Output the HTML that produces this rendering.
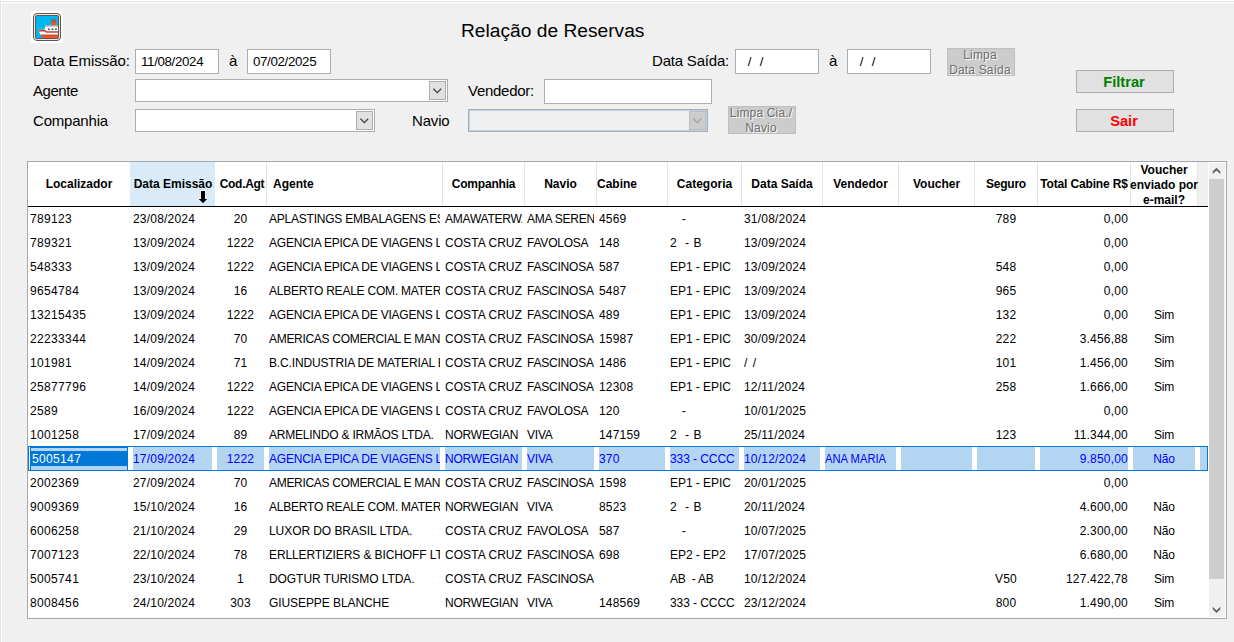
<!DOCTYPE html>
<html lang="pt-BR"><head><meta charset="utf-8"><title>Relação de Reservas</title>
<style>
*{box-sizing:border-box;margin:0;padding:0}
html,body{width:1234px;height:642px;overflow:hidden;background:#f0f0f0}
body{position:relative;font-family:"Liberation Sans",sans-serif;color:#000;font-size:12px}
.abs{position:absolute}
.frame-t{position:absolute;left:0;top:0;width:1234px;height:3px;background:linear-gradient(#fff 0 1px,#e3e3e3 1px 2px,#fff 2px 3px)}
.frame-l{position:absolute;left:0;top:1px;width:1px;height:641px;background:#e3e3e3}
.frame-l2{position:absolute;left:1px;top:2px;width:1px;height:640px;background:#fff}
.lbl{position:absolute;font-size:15px;line-height:20px;white-space:nowrap}
.inp{position:absolute;background:#fff;border:1px solid #abadb3;font-size:13.33px;line-height:24px;padding-left:5px;white-space:pre;letter-spacing:-.35px}
.cmb{position:absolute;background:#fff;border:1px solid #abadb3}
.cmb .dd{position:absolute;right:1px;top:1px;bottom:1px;width:17px;background:#e1e1e1;border:1px solid #abadb3}
.btn{position:absolute;background:#e1e1e1;border:1px solid #adadad;text-align:center;font-weight:bold;font-size:14.67px;line-height:22px;padding-right:2px}
.dbtn{position:absolute;background:#cccccc;border:1px solid #bfbfbf;color:#6d6d6d;text-align:center;font-size:12px;line-height:15px;text-shadow:1px 1px 0 #fff}
.dbtn span{position:relative;top:-1px;left:-1px;display:block;letter-spacing:.15px}
#grid{position:absolute;left:27px;top:161px;width:1200px;height:458px;background:#fff;border:1px solid #a3a9b3}
.hc{position:absolute;top:162px;height:44px;font-weight:bold;font-size:12px;line-height:14px;display:flex;align-items:center;white-space:nowrap}
.hc.ctr{justify-content:center;text-align:center}
.hs{position:absolute;top:162px;width:1px;height:44px;background:#e5e5e5}
.r{position:absolute;left:28px;width:1180px;height:24px}
.c{position:absolute;top:0;height:24px;line-height:24px;font-size:12px;white-space:pre;overflow:hidden}
.c.t{letter-spacing:-.22px}
.c.n{letter-spacing:.2px}
.sel .c{color:#0000ff;background:#b4d5f1;top:0;height:23px;line-height:24px}
</style></head><body>
<div class="frame-t"></div><div class="frame-l"></div><div class="frame-l2"></div>

<svg class="abs" style="left:31px;top:11px" width="32" height="32" viewBox="0 0 32 32">
<rect width="32" height="32" fill="#fff"/>
<rect x="2.5" y="2.5" width="27" height="27" rx="3.5" fill="#f2ebe4" stroke="#5e5652" stroke-width="1"/>
<rect x="4.5" y="4.5" width="23" height="23" rx="1.5" fill="#00b8f1" stroke="#5e5652" stroke-width="1"/>
<rect x="20.2" y="8.5" width="5" height="5.6" fill="#f4512c"/>
<rect x="20.2" y="8.5" width="5" height="2.1" fill="#6f5550"/>
<rect x="20.2" y="9.2" width="5" height="0.6" fill="#9a8580"/>
<path d="M15 13.9 H27 V20.6 H14.2 Q12.6 18.2 15 13.9 Z" fill="#fff"/>
<rect x="14.9" y="13.8" width="12.1" height="1" fill="#8d8380"/>
<rect x="14.6" y="14.8" width="12.4" height="1.2" fill="#cfc9c7"/>
<circle cx="17.9" cy="18.2" r="0.95" fill="#0c5f80"/><circle cx="21.5" cy="18.2" r="0.95" fill="#0c5f80"/><circle cx="25" cy="18.2" r="0.95" fill="#0c5f80"/>
<path d="M7.2 18.7 H13.8 L15.8 20.3 H27 V27 H12.4 Q8.6 24 7.2 18.7 Z" fill="#fff"/>
<path d="M7.2 18.7 H13.8 L15.8 20.3 H27 V21.7 H15.3 L13.3 20.4 H7.7 Z" fill="#c9452c"/>
<path d="M8.9 23 H27 V24 H9.4 Z" fill="#c5d3d8"/>
<path d="M9.4 24 H27 V27 H12.4 Q10.6 25.8 9.4 24 Z" fill="#f4512c"/>
<path d="M9.4 24 H27" stroke="#b8402a" stroke-width="0.5" fill="none"/>
</svg>
<div class="abs" style="left:461px;top:19px;font-size:19.2px;line-height:24px;white-space:nowrap">Relação de Reservas</div>
<div class="lbl" style="left:33px;top:51px;letter-spacing:-0.05px">Data Emissão:</div>
<div class="lbl" style="left:229px;top:51px;letter-spacing:0px">à</div>
<div class="lbl" style="left:652px;top:51px;letter-spacing:-0.2px">Data Saída:</div>
<div class="lbl" style="left:829px;top:51px;letter-spacing:0px">à</div>
<div class="lbl" style="left:33px;top:81px;letter-spacing:-0.45px">Agente</div>
<div class="lbl" style="left:468px;top:81px;letter-spacing:-0.28px">Vendedor:</div>
<div class="lbl" style="left:33px;top:111px;letter-spacing:-0.2px">Companhia</div>
<div class="lbl" style="left:412px;top:111px;letter-spacing:-0.17px">Navio</div>
<div class="inp" style="left:135px;top:49px;width:84px;height:25px">11/08/2024</div>
<div class="inp" style="left:247px;top:49px;width:84px;height:25px">07/02/2025</div>
<div class="inp" style="left:735px;top:49px;width:84px;height:25px">  /<span style="margin-left:2px">  /</span></div>
<div class="inp" style="left:847px;top:49px;width:84px;height:25px">  /<span style="margin-left:2px">  /</span></div>
<div class="inp" style="left:544px;top:79px;width:168px;height:25px"></div>
<div class="cmb" style="left:135px;top:79px;width:313px;height:23px"><div class="dd"><svg width="9" height="6" viewBox="0 0 9 6" style="position:absolute;left:3px;top:6px"><path d="M0.4 0.7 L4.3 4.6 L8.2 0.7" fill="none" stroke="#404040" stroke-width="1.3"/></svg></div></div>
<div class="cmb" style="left:135px;top:109px;width:240px;height:23px"><div class="dd"><svg width="9" height="6" viewBox="0 0 9 6" style="position:absolute;left:3px;top:6px"><path d="M0.4 0.7 L4.3 4.6 L8.2 0.7" fill="none" stroke="#404040" stroke-width="1.3"/></svg></div></div>
<div class="cmb" style="left:468px;top:109px;width:240px;height:23px;background:#f0f0f0;border-color:#adadad;box-shadow:inset 0 0 0 1px #b5d3f2"><div class="dd" style="background:#cccccc;border-color:#bfbfbf"><svg width="9" height="6" viewBox="0 0 9 6" style="position:absolute;left:3px;top:6px"><path d="M0.4 0.7 L4.3 4.6 L8.2 0.7" fill="none" stroke="#a0a0a0" stroke-width="1.3"/></svg></div></div>
<div class="dbtn" style="left:947px;top:48px;width:68px;height:28px"><span>Limpa<br>Data Saída</span></div>
<div class="dbtn" style="left:728px;top:106px;width:68px;height:28px"><span>Limpa Cia./<br>Navio</span></div>
<div class="btn" style="left:1076px;top:70px;width:98px;height:23px;color:#008000">Filtrar</div>
<div class="btn" style="left:1076px;top:109px;width:98px;height:23px;color:#ff0000">Sair</div>
<div id="grid"></div>
<div class="abs" style="left:130px;top:162px;width:85px;height:44px;background:#d9ebf9"></div>
<div class="abs" style="left:1198px;top:162px;width:10px;height:44px;background:#f0f0f0"></div>
<div class="hs" style="left:266px"></div>
<div class="hs" style="left:442px"></div>
<div class="hs" style="left:524px"></div>
<div class="hs" style="left:596px"></div>
<div class="hs" style="left:667px"></div>
<div class="hs" style="left:741px"></div>
<div class="hs" style="left:822px"></div>
<div class="hs" style="left:898px"></div>
<div class="hs" style="left:974px"></div>
<div class="hs" style="left:1037px"></div>
<div class="hs" style="left:1130px"></div>
<div class="hs" style="left:1197px"></div>
<div class="hc ctr" style="left:28px;width:102px;">Localizador</div>
<div class="hc ctr" style="left:131px;width:83px;padding-left:1px;">Data Emissão</div>
<div class="hc ctr" style="left:215px;width:51px;letter-spacing:-0.3px;padding-left:3px;">Cod.Agt</div>
<div class="hc" style="left:267px;width:175px;padding-left:6px;">Agente</div>
<div class="hc ctr" style="left:443px;width:81px;letter-spacing:-0.2px;">Companhia</div>
<div class="hc ctr" style="left:525px;width:71px;">Navio</div>
<div class="hc" style="left:597px;width:70px;padding-left:0px;">Cabine</div>
<div class="hc ctr" style="left:668px;width:73px;">Categoria</div>
<div class="hc ctr" style="left:742px;width:80px;">Data Saída</div>
<div class="hc ctr" style="left:823px;width:75px;">Vendedor</div>
<div class="hc ctr" style="left:899px;width:75px;">Voucher</div>
<div class="hc ctr" style="left:975px;width:62px;letter-spacing:-0.25px;">Seguro</div>
<div class="hc ctr" style="left:1038px;width:92px;letter-spacing:-0.15px;">Total Cabine R$</div>
<div class="hc ctr" style="left:1131px;width:66px;line-height:15px;top:163px;height:45px;">Voucher<br>enviado por<br>e-mail?</div>
<svg class="abs" style="left:198px;top:190px" width="10" height="14" viewBox="0 0 10 14"><path d="M3 1.1 H7 V9 H9.3 L5 13.2 L0.7 9 H3 Z" fill="#000" stroke="#fff" stroke-opacity=".75" stroke-width="1.2" paint-order="stroke"/></svg>
<div class="abs" style="left:28px;top:206px;width:1180px;height:1px;background:#000"></div>
<div class="r" style="top:207px">
<div class="c n" style="left:2px;width:98px;letter-spacing:.35px;">789123</div>
<div class="c n" style="left:105px;width:79px;">23/08/2024</div>
<div class="c n" style="left:189px;width:47px;text-align:center;">20</div>
<div class="c t" style="left:241px;width:171px;">APLASTINGS EMBALAGENS ESPECIAIS</div>
<div class="c t" style="left:417px;width:77px;">AMAWATERWAYS</div>
<div class="c t" style="left:499px;width:67px;">AMA SERENA</div>
<div class="c n" style="left:571px;width:66px;">4569</div>
<div class="c t" style="left:642px;width:69px;letter-spacing:0.55px;">   -</div>
<div class="c n" style="left:716px;width:76px;">31/08/2024</div>
<div class="c n" style="left:949px;width:58px;text-align:center;">789</div>
<div class="c n" style="left:1012px;width:88px;text-align:right;">0,00</div>
</div>
<div class="r" style="top:231px">
<div class="c n" style="left:2px;width:98px;letter-spacing:.35px;">789321</div>
<div class="c n" style="left:105px;width:79px;">13/09/2024</div>
<div class="c n" style="left:189px;width:47px;text-align:center;">1222</div>
<div class="c t" style="left:241px;width:171px;">AGENCIA EPICA DE VIAGENS LTDA</div>
<div class="c t" style="left:417px;width:77px;letter-spacing:0.05px;">COSTA CRUZ</div>
<div class="c t" style="left:499px;width:67px;">FAVOLOSA</div>
<div class="c n" style="left:571px;width:66px;">148</div>
<div class="c t" style="left:642px;width:69px;letter-spacing:0.55px;">2  - B</div>
<div class="c n" style="left:716px;width:76px;">13/09/2024</div>
<div class="c n" style="left:1012px;width:88px;text-align:right;">0,00</div>
</div>
<div class="r" style="top:255px">
<div class="c n" style="left:2px;width:98px;letter-spacing:.35px;">548333</div>
<div class="c n" style="left:105px;width:79px;">13/09/2024</div>
<div class="c n" style="left:189px;width:47px;text-align:center;">1222</div>
<div class="c t" style="left:241px;width:171px;">AGENCIA EPICA DE VIAGENS LTDA</div>
<div class="c t" style="left:417px;width:77px;letter-spacing:0.05px;">COSTA CRUZ</div>
<div class="c t" style="left:499px;width:67px;">FASCINOSA</div>
<div class="c n" style="left:571px;width:66px;">587</div>
<div class="c t" style="left:642px;width:69px;letter-spacing:-0.05px;">EP1 - EPIC</div>
<div class="c n" style="left:716px;width:76px;">13/09/2024</div>
<div class="c n" style="left:949px;width:58px;text-align:center;">548</div>
<div class="c n" style="left:1012px;width:88px;text-align:right;">0,00</div>
</div>
<div class="r" style="top:279px">
<div class="c n" style="left:2px;width:98px;letter-spacing:.35px;">9654784</div>
<div class="c n" style="left:105px;width:79px;">13/09/2024</div>
<div class="c n" style="left:189px;width:47px;text-align:center;">16</div>
<div class="c t" style="left:241px;width:171px;">ALBERTO REALE COM. MATERIAIS</div>
<div class="c t" style="left:417px;width:77px;letter-spacing:0.05px;">COSTA CRUZ</div>
<div class="c t" style="left:499px;width:67px;">FASCINOSA</div>
<div class="c n" style="left:571px;width:66px;">5487</div>
<div class="c t" style="left:642px;width:69px;letter-spacing:-0.05px;">EP1 - EPIC</div>
<div class="c n" style="left:716px;width:76px;">13/09/2024</div>
<div class="c n" style="left:949px;width:58px;text-align:center;">965</div>
<div class="c n" style="left:1012px;width:88px;text-align:right;">0,00</div>
</div>
<div class="r" style="top:303px">
<div class="c n" style="left:2px;width:98px;letter-spacing:.35px;">13215435</div>
<div class="c n" style="left:105px;width:79px;">13/09/2024</div>
<div class="c n" style="left:189px;width:47px;text-align:center;">1222</div>
<div class="c t" style="left:241px;width:171px;">AGENCIA EPICA DE VIAGENS LTDA</div>
<div class="c t" style="left:417px;width:77px;letter-spacing:0.05px;">COSTA CRUZ</div>
<div class="c t" style="left:499px;width:67px;">FASCINOSA</div>
<div class="c n" style="left:571px;width:66px;">489</div>
<div class="c t" style="left:642px;width:69px;letter-spacing:-0.05px;">EP1 - EPIC</div>
<div class="c n" style="left:716px;width:76px;">13/09/2024</div>
<div class="c n" style="left:949px;width:58px;text-align:center;">132</div>
<div class="c n" style="left:1012px;width:88px;text-align:right;">0,00</div>
<div class="c t" style="left:1105px;width:62px;text-align:center;">Sim</div>
</div>
<div class="r" style="top:327px">
<div class="c n" style="left:2px;width:98px;letter-spacing:.35px;">22233344</div>
<div class="c n" style="left:105px;width:79px;">14/09/2024</div>
<div class="c n" style="left:189px;width:47px;text-align:center;">70</div>
<div class="c t" style="left:241px;width:171px;letter-spacing:-0.3px;">AMERICAS COMERCIAL E MANUFATURA</div>
<div class="c t" style="left:417px;width:77px;letter-spacing:0.05px;">COSTA CRUZ</div>
<div class="c t" style="left:499px;width:67px;">FASCINOSA</div>
<div class="c n" style="left:571px;width:66px;">15987</div>
<div class="c t" style="left:642px;width:69px;letter-spacing:-0.05px;">EP1 - EPIC</div>
<div class="c n" style="left:716px;width:76px;">30/09/2024</div>
<div class="c n" style="left:949px;width:58px;text-align:center;">222</div>
<div class="c n" style="left:1012px;width:88px;text-align:right;">3.456,88</div>
<div class="c t" style="left:1105px;width:62px;text-align:center;">Sim</div>
</div>
<div class="r" style="top:351px">
<div class="c n" style="left:2px;width:98px;letter-spacing:.35px;">101981</div>
<div class="c n" style="left:105px;width:79px;">14/09/2024</div>
<div class="c n" style="left:189px;width:47px;text-align:center;">71</div>
<div class="c t" style="left:241px;width:171px;letter-spacing:-0.15px;">B.C.INDUSTRIA DE MATERIAL ELETRICO</div>
<div class="c t" style="left:417px;width:77px;letter-spacing:0.05px;">COSTA CRUZ</div>
<div class="c t" style="left:499px;width:67px;">FASCINOSA</div>
<div class="c n" style="left:571px;width:66px;">1486</div>
<div class="c t" style="left:642px;width:69px;letter-spacing:-0.05px;">EP1 - EPIC</div>
<div class="c n" style="left:716px;width:76px;letter-spacing:1.1px;">/ /</div>
<div class="c n" style="left:949px;width:58px;text-align:center;">101</div>
<div class="c n" style="left:1012px;width:88px;text-align:right;">1.456,00</div>
<div class="c t" style="left:1105px;width:62px;text-align:center;">Sim</div>
</div>
<div class="r" style="top:375px">
<div class="c n" style="left:2px;width:98px;letter-spacing:.35px;">25877796</div>
<div class="c n" style="left:105px;width:79px;">14/09/2024</div>
<div class="c n" style="left:189px;width:47px;text-align:center;">1222</div>
<div class="c t" style="left:241px;width:171px;">AGENCIA EPICA DE VIAGENS LTDA</div>
<div class="c t" style="left:417px;width:77px;letter-spacing:0.05px;">COSTA CRUZ</div>
<div class="c t" style="left:499px;width:67px;">FASCINOSA</div>
<div class="c n" style="left:571px;width:66px;">12308</div>
<div class="c t" style="left:642px;width:69px;letter-spacing:-0.05px;">EP1 - EPIC</div>
<div class="c n" style="left:716px;width:76px;">12/11/2024</div>
<div class="c n" style="left:949px;width:58px;text-align:center;">258</div>
<div class="c n" style="left:1012px;width:88px;text-align:right;">1.666,00</div>
<div class="c t" style="left:1105px;width:62px;text-align:center;">Sim</div>
</div>
<div class="r" style="top:399px">
<div class="c n" style="left:2px;width:98px;letter-spacing:.35px;">2589</div>
<div class="c n" style="left:105px;width:79px;">16/09/2024</div>
<div class="c n" style="left:189px;width:47px;text-align:center;">1222</div>
<div class="c t" style="left:241px;width:171px;">AGENCIA EPICA DE VIAGENS LTDA</div>
<div class="c t" style="left:417px;width:77px;letter-spacing:0.05px;">COSTA CRUZ</div>
<div class="c t" style="left:499px;width:67px;">FAVOLOSA</div>
<div class="c n" style="left:571px;width:66px;">120</div>
<div class="c t" style="left:642px;width:69px;letter-spacing:0.55px;">   -</div>
<div class="c n" style="left:716px;width:76px;">10/01/2025</div>
<div class="c n" style="left:1012px;width:88px;text-align:right;">0,00</div>
</div>
<div class="r" style="top:423px">
<div class="c n" style="left:2px;width:98px;letter-spacing:.35px;">1001258</div>
<div class="c n" style="left:105px;width:79px;">17/09/2024</div>
<div class="c n" style="left:189px;width:47px;text-align:center;">89</div>
<div class="c t" style="left:241px;width:171px;">ARMELINDO &amp; IRMÃOS LTDA.</div>
<div class="c t" style="left:417px;width:77px;">NORWEGIAN</div>
<div class="c t" style="left:499px;width:67px;">VIVA</div>
<div class="c n" style="left:571px;width:66px;">147159</div>
<div class="c t" style="left:642px;width:69px;letter-spacing:0.55px;">2  - B</div>
<div class="c n" style="left:716px;width:76px;">25/11/2024</div>
<div class="c n" style="left:949px;width:58px;text-align:center;">123</div>
<div class="c n" style="left:1012px;width:88px;text-align:right;">11.344,00</div>
<div class="c t" style="left:1105px;width:62px;text-align:center;">Sim</div>
</div>
<div class="r sel" style="top:446px;height:25px;border:1px solid #0078d7">
<div class="c n" style="left:1px;width:98px;letter-spacing:.35px;"><span style="position:absolute;left:0;right:0;top:0;height:1px;background:#0078d7"></span><span style="position:absolute;left:0;width:1px;top:0;bottom:0;background:#0078d7"></span><span style="position:absolute;right:0;width:1px;top:0;bottom:0;background:#0078d7"></span><span style="position:absolute;left:0;right:0;top:4px;height:15px;line-height:16px;padding-left:2px;background:#0078d7;color:#fff">5005147</span></div>
<div class="c n" style="left:104px;width:79px;">17/09/2024</div>
<div class="c n" style="left:188px;width:47px;text-align:center;">1222</div>
<div class="c t" style="left:240px;width:171px;">AGENCIA EPICA DE VIAGENS LTDA</div>
<div class="c t" style="left:416px;width:77px;">NORWEGIAN</div>
<div class="c t" style="left:498px;width:67px;">VIVA</div>
<div class="c n" style="left:570px;width:66px;">370</div>
<div class="c t" style="left:641px;width:69px;letter-spacing:-0.08px;">333 - CCCC</div>
<div class="c n" style="left:715px;width:76px;">10/12/2024</div>
<div class="c t" style="left:796px;width:71px;"><span style="display:inline-block;letter-spacing:0;transform:scaleX(.935);transform-origin:0 0">ANA MARIA</span></div>
<div class="c t" style="left:872px;width:71px;"></div>
<div class="c n" style="left:948px;width:58px;text-align:center;"></div>
<div class="c n" style="left:1011px;width:88px;text-align:right;">9.850,00</div>
<div class="c t" style="left:1104px;width:62px;text-align:center;">Não</div>
<div class="c" style="left:1171px;width:7px"></div>
</div>
<div class="r" style="top:471px">
<div class="c n" style="left:2px;width:98px;letter-spacing:.35px;">2002369</div>
<div class="c n" style="left:105px;width:79px;">27/09/2024</div>
<div class="c n" style="left:189px;width:47px;text-align:center;">70</div>
<div class="c t" style="left:241px;width:171px;letter-spacing:-0.3px;">AMERICAS COMERCIAL E MANUFATURA</div>
<div class="c t" style="left:417px;width:77px;letter-spacing:0.05px;">COSTA CRUZ</div>
<div class="c t" style="left:499px;width:67px;">FASCINOSA</div>
<div class="c n" style="left:571px;width:66px;">1598</div>
<div class="c t" style="left:642px;width:69px;letter-spacing:-0.05px;">EP1 - EPIC</div>
<div class="c n" style="left:716px;width:76px;">20/01/2025</div>
<div class="c n" style="left:1012px;width:88px;text-align:right;">0,00</div>
</div>
<div class="r" style="top:495px">
<div class="c n" style="left:2px;width:98px;letter-spacing:.35px;">9009369</div>
<div class="c n" style="left:105px;width:79px;">15/10/2024</div>
<div class="c n" style="left:189px;width:47px;text-align:center;">16</div>
<div class="c t" style="left:241px;width:171px;">ALBERTO REALE COM. MATERIAIS</div>
<div class="c t" style="left:417px;width:77px;">NORWEGIAN</div>
<div class="c t" style="left:499px;width:67px;">VIVA</div>
<div class="c n" style="left:571px;width:66px;">8523</div>
<div class="c t" style="left:642px;width:69px;letter-spacing:0.55px;">2  - B</div>
<div class="c n" style="left:716px;width:76px;">20/11/2024</div>
<div class="c n" style="left:1012px;width:88px;text-align:right;">4.600,00</div>
<div class="c t" style="left:1105px;width:62px;text-align:center;">Não</div>
</div>
<div class="r" style="top:519px">
<div class="c n" style="left:2px;width:98px;letter-spacing:.35px;">6006258</div>
<div class="c n" style="left:105px;width:79px;">21/10/2024</div>
<div class="c n" style="left:189px;width:47px;text-align:center;">29</div>
<div class="c t" style="left:241px;width:171px;letter-spacing:-0.07px;">LUXOR DO BRASIL LTDA.</div>
<div class="c t" style="left:417px;width:77px;letter-spacing:0.05px;">COSTA CRUZ</div>
<div class="c t" style="left:499px;width:67px;">FAVOLOSA</div>
<div class="c n" style="left:571px;width:66px;">587</div>
<div class="c t" style="left:642px;width:69px;letter-spacing:0.55px;">   -</div>
<div class="c n" style="left:716px;width:76px;">10/07/2025</div>
<div class="c n" style="left:1012px;width:88px;text-align:right;">2.300,00</div>
<div class="c t" style="left:1105px;width:62px;text-align:center;">Não</div>
</div>
<div class="r" style="top:543px">
<div class="c n" style="left:2px;width:98px;letter-spacing:.35px;">7007123</div>
<div class="c n" style="left:105px;width:79px;">22/10/2024</div>
<div class="c n" style="left:189px;width:47px;text-align:center;">78</div>
<div class="c t" style="left:241px;width:171px;letter-spacing:-0.1px;">ERLLERTIZIERS &amp; BICHOFF LTDA</div>
<div class="c t" style="left:417px;width:77px;letter-spacing:0.05px;">COSTA CRUZ</div>
<div class="c t" style="left:499px;width:67px;">FASCINOSA</div>
<div class="c n" style="left:571px;width:66px;">698</div>
<div class="c t" style="left:642px;width:69px;letter-spacing:-0.05px;">EP2 - EP2</div>
<div class="c n" style="left:716px;width:76px;">17/07/2025</div>
<div class="c n" style="left:1012px;width:88px;text-align:right;">6.680,00</div>
<div class="c t" style="left:1105px;width:62px;text-align:center;">Não</div>
</div>
<div class="r" style="top:567px">
<div class="c n" style="left:2px;width:98px;letter-spacing:.35px;">5005741</div>
<div class="c n" style="left:105px;width:79px;">23/10/2024</div>
<div class="c n" style="left:189px;width:47px;text-align:center;">1</div>
<div class="c t" style="left:241px;width:171px;letter-spacing:-0.07px;">DOGTUR TURISMO LTDA.</div>
<div class="c t" style="left:417px;width:77px;letter-spacing:0.05px;">COSTA CRUZ</div>
<div class="c t" style="left:499px;width:67px;">FASCINOSA</div>
<div class="c t" style="left:642px;width:69px;">AB  - AB</div>
<div class="c n" style="left:716px;width:76px;">10/12/2024</div>
<div class="c n" style="left:949px;width:58px;text-align:center;">V50</div>
<div class="c n" style="left:1012px;width:88px;text-align:right;">127.422,78</div>
<div class="c t" style="left:1105px;width:62px;text-align:center;">Sim</div>
</div>
<div class="r" style="top:591px">
<div class="c n" style="left:2px;width:98px;letter-spacing:.35px;">8008456</div>
<div class="c n" style="left:105px;width:79px;">24/10/2024</div>
<div class="c n" style="left:189px;width:47px;text-align:center;">303</div>
<div class="c t" style="left:241px;width:171px;letter-spacing:-0.08px;">GIUSEPPE BLANCHE</div>
<div class="c t" style="left:417px;width:77px;">NORWEGIAN</div>
<div class="c t" style="left:499px;width:67px;">VIVA</div>
<div class="c n" style="left:571px;width:66px;">148569</div>
<div class="c t" style="left:642px;width:69px;letter-spacing:-0.08px;">333 - CCCC</div>
<div class="c n" style="left:716px;width:76px;">23/12/2024</div>
<div class="c n" style="left:949px;width:58px;text-align:center;">800</div>
<div class="c n" style="left:1012px;width:88px;text-align:right;">1.490,00</div>
<div class="c t" style="left:1105px;width:62px;text-align:center;">Sim</div>
</div>
<div class="abs" style="left:1209px;top:163px;width:16px;height:454px;background:#f0f0f0"></div>
<div class="abs" style="left:1209px;top:179px;width:15px;height:400px;background:#cdcdcd"></div>
<svg class="abs" style="left:1212px;top:167px" width="10" height="8" viewBox="0 0 10 8"><path d="M4.5 0.8 L8.3 4.6 V7.1 L4.5 3.5 L0.7 7.1 V4.6 Z" fill="#606060"/></svg>
<svg class="abs" style="left:1212px;top:606px" width="10" height="8" viewBox="0 0 10 8"><path d="M4.5 7.1 L8.3 3.3 V0.8 L4.5 4.4 L0.7 0.8 V3.3 Z" fill="#606060"/></svg>

</body></html>
